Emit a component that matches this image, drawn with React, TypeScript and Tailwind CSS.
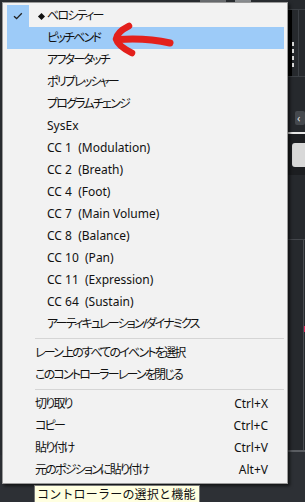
import React from "react";

type Item =
  | { kind: "sep" }
  | { kind: "item"; label: string; shortcut?: string };

const TOP_ITEMS: string[] = [
  "アフタータッチ",
  "ポリプレッシャー",
  "プログラムチェンジ",
  "SysEx",
  "CC 1  (Modulation)",
  "CC 2  (Breath)",
  "CC 4  (Foot)",
  "CC 7  (Main Volume)",
  "CC 8  (Balance)",
  "CC 10  (Pan)",
  "CC 11  (Expression)",
  "CC 64  (Sustain)",
  "アーティキュレーション/ダイナミクス",
];

const LOWER: Item[] = [
  { kind: "sep" },
  { kind: "item", label: "レーン上のすべてのイベントを選択" },
  { kind: "item", label: "このコントローラーレーンを閉じる" },
  { kind: "sep" },
  { kind: "item", label: "切り取り", shortcut: "Ctrl+X" },
  { kind: "item", label: "コピー", shortcut: "Ctrl+C" },
  { kind: "item", label: "貼り付け", shortcut: "Ctrl+V" },
  { kind: "item", label: "元のポジションに貼り付け", shortcut: "Alt+V" },
];

const font =
  "font-['Noto_Sans','Noto_Sans_CJK_JP',sans-serif] text-[12px] [font-feature-settings:'palt'] text-[#111]";

// yu gothic ui kana are much narrower than noto's, squeeze them a bit
const isJp = (s: string) => /[^\x00-\x7F]/.test(s);

function Label({ text }: { text: string }) {
  return (
    <span className={isJp(text) ? "whitespace-pre tracking-[-1.8px]" : "whitespace-pre"}>
      {text}
    </span>
  );
}

function Check() {
  return (
    <svg width="10" height="8" viewBox="0 0 10 8" fill="none">
      <path d="M1 4.2 L3.6 6.6 L8.8 1.2" stroke="#222" strokeWidth="1.3" />
    </svg>
  );
}

function Arrow() {
  return (
    <svg
      className="absolute left-0 top-0 pointer-events-none"
      width="305"
      height="80"
      viewBox="0 0 305 80"
      fill="none"
    >
      <path
        d="M129 26 Q117 32 116 39 Q118 46 132 53"
        stroke="#e3201c"
        strokeWidth="6.5"
        strokeLinecap="round"
        strokeLinejoin="round"
      />
      <path
        d="M118 39.5 Q146 37.5 170 43"
        stroke="#e3201c"
        strokeWidth="7"
        strokeLinecap="round"
      />
    </svg>
  );
}

function RightStrip() {
  return (
    <div className="flex w-[17px] flex-col bg-[#26292d]">
      <div className="h-[10px] border-b border-[#3c4045]" />
      <div className="flex h-[66px]">
        <div className="w-[4px] bg-black" />
        <div className="flex flex-col gap-[3px] pt-[32px]">
          <div className="h-[4px] w-[2px] bg-[#d8d8d8]" />
          <div className="h-[4px] w-[2px] bg-[#d8d8d8]" />
          <div className="h-[4px] w-[2px] bg-[#d8d8d8]" />
          <div className="h-[4px] w-[2px] bg-[#d8d8d8]" />
        </div>
        <div className="ml-auto w-[7px] border-l border-[#3c4045]" />
      </div>
      <div className="h-[35px] border-t border-[#3c4045]" />
      <div className="ml-[7px] h-[14px] rounded-[2px] bg-[#45494e] pl-[2px] text-[11px] leading-[13px] text-[#ddd]">
        ‹
      </div>
      <div className="h-[7px]" />
      <div className="h-[2px] bg-[#e8e8e8]" />
      <div className="flex h-[41px] items-center bg-[#1c1e21] pl-[4px]">
        <div className="h-[24px] w-full rounded-l-[3px] bg-[#d8d8d8]" />
      </div>
      <div className="h-[65px] border-b border-[#44474c]" />
      <div className="flex h-[212px] justify-end border-b-2 border-[#5a5d62]">
        <div className="flex w-[2px] flex-col border-l border-[#4a4d52]">
          <div className="h-[86px]" />
          <div className="h-[6px] bg-[#e0245a]" />
        </div>
      </div>
      <div className="flex-1 bg-[#2d3035]" />
    </div>
  );
}

function Backdrop() {
  return (
    <div className="absolute inset-0 flex">
      <div className="flex flex-1 flex-col bg-[#2a2d31]">
        <div className="flex h-[2px] gap-[9px] pl-[200px]">
          <div className="w-[26px] bg-[#6a6d70]" />
          <div className="w-[16px] bg-[#8a8d90]" />
        </div>
        <div className="flex-1" />
        <div className="h-[47px] bg-[#2d3035]" />
      </div>
      <RightStrip />
    </div>
  );
}

export default function App() {
  return (
    <div className={`relative w-[305px] h-[502px] overflow-hidden ${font}`}>
      <Backdrop />

      {/* context menu */}
      <div className="absolute left-[2px] top-[2px] w-[286px] border border-[#9a9a9a] bg-[#f2f2f2] pl-[4px] pr-[3px] pt-[2px] pb-[2px] shadow-[2px_2px_3px_rgba(0,0,0,0.6)]">
        <div className="flex h-[22px] items-center">
          <div className="flex h-full w-[22px] items-center justify-center bg-[#9dcbf8]">
            <Check />
          </div>
          <div className="w-[18px] pl-[10px]">
            <div className="h-[5px] w-[5px] rotate-45 bg-[#111]" />
          </div>
          <Label text="ベロシティー" />
        </div>

        <div className="flex h-[22px] items-center bg-[#9dcbf8] pl-[40px]">
          <Label text="ピッチベンド" />
        </div>

        {TOP_ITEMS.map((label) => (
          <div key={label} className="flex h-[22px] items-center pl-[40px]">
            <Label text={label} />
          </div>
        ))}

        {LOWER.map((it, i) =>
          it.kind === "sep" ? (
            <div key={i} className="h-[7px] pl-[28px] pt-[3px]">
              <div className="h-px bg-[#d5d5d5]" />
            </div>
          ) : (
            <div key={i} className="flex h-[22px] items-center justify-between pl-[28px] pr-[16px]">
              <Label text={it.label} />
              {it.shortcut && <span>{it.shortcut}</span>}
            </div>
          )
        )}
      </div>

      <Arrow />

      {/* tooltip */}
      <div className="absolute left-[34px] top-[485px] h-[24px] w-[166px] border border-[#767676] bg-[#ffffe1] pl-[2px] leading-[18px] [font-feature-settings:normal]">
        <span className="tracking-[0.2px]">コントローラーの選択と機能</span>
      </div>
    </div>
  );
}
